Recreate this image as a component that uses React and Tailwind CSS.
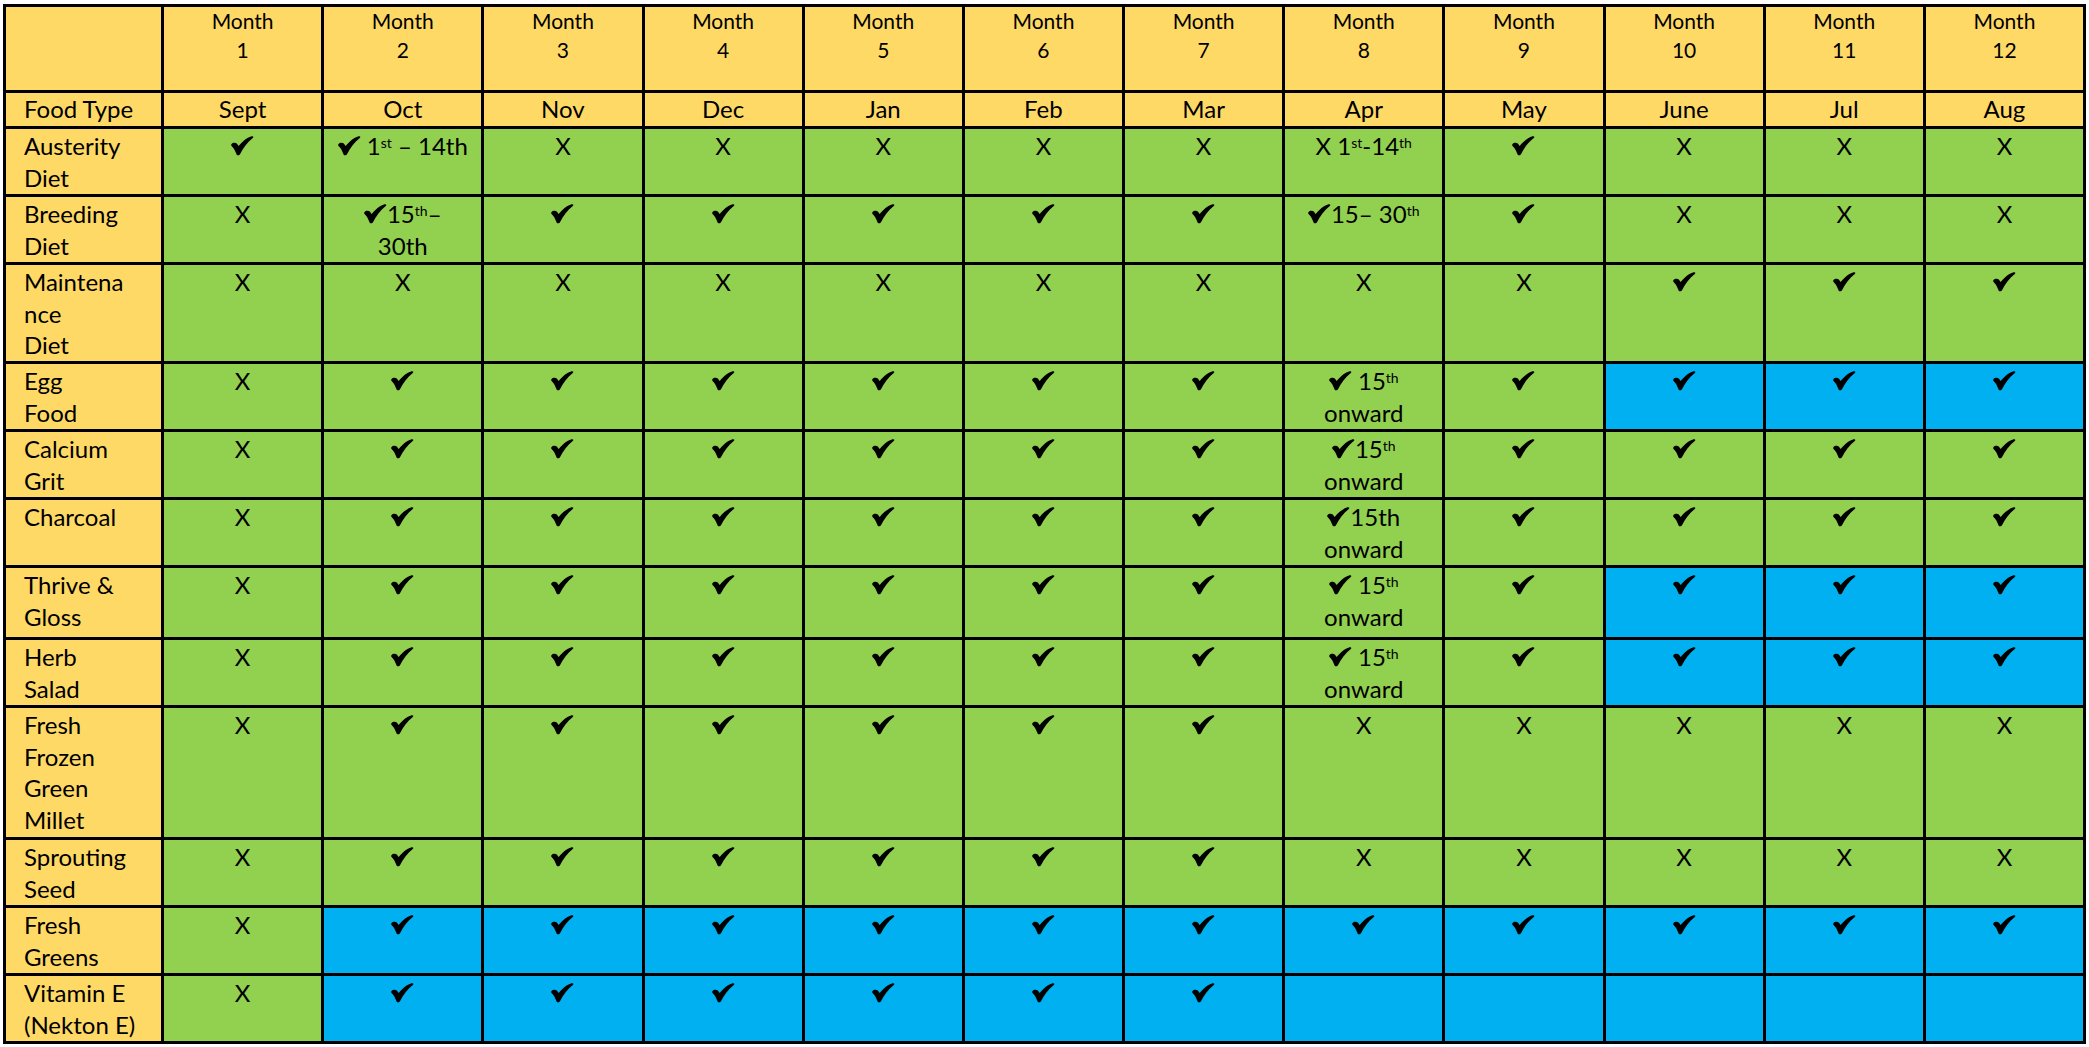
import React from "react";

const Y = "bg-[#FFD966]";
const G = "bg-[#92D050]";
const B = "bg-[#00B0F0]";

function Check() {
  return (
    <svg
      viewBox="0 0 24 21"
      className="inline-block w-[23px] h-[20px] align-[-1px]"
      aria-hidden="true"
    >
      <path
        d="M0.5 8.5 C1.5 6.8 4.5 6.5 6 7.8 L8 10.6 C11.5 6 16.5 1.8 21.5 0.3 C23.2 -0.2 24 1 22.8 2 C17 6.5 12.5 12.5 9.5 19 C8.8 20.5 6.6 20.8 5.8 19.3 C4.2 15.5 2.5 12 0.5 10.5 C0 10 0 9.2 0.5 8.5 Z"
        fill="#000"
      />
    </svg>
  );
}

const c = "c";
const x = "x";

const oct1 = (
  <>
    <Check /> 1<sup className="text-[14px]">st</sup> – 14th
  </>
);
const apr1 = (
  <>
    X 1<sup className="text-[14px]">st</sup>-14<sup className="text-[14px]">th</sup>
  </>
);
const octB = (
  <>
    <Check />15<sup className="text-[14px]">th</sup>–
    <br />
    30th
  </>
);
const aprB = (
  <>
    <Check />15– 30<sup className="text-[14px]">th</sup>
  </>
);
const aprSp = (
  <>
    <Check /> 15<sup className="text-[14px]">th</sup>
    <br />
    onward
  </>
);
const aprNs = (
  <>
    <Check />15<sup className="text-[14px]">th</sup>
    <br />
    onward
  </>
);
const aprPlain = (
  <>
    <Check />15th
    <br />
    onward
  </>
);

const late = [9, 10, 11];
const fromOct = [1, 2, 3, 4, 5, 6, 7, 8, 9, 10, 11];

const rows = [
  { label: ["Austerity", "Diet"], cells: [c, oct1, x, x, x, x, x, apr1, c, x, x, x], blue: [] },
  { label: ["Breeding", "Diet"], cells: [x, octB, c, c, c, c, c, aprB, c, x, x, x], blue: [] },
  { label: ["Maintena", "nce", "Diet"], cells: [x, x, x, x, x, x, x, x, x, c, c, c], blue: [] },
  { label: ["Egg", "Food"], cells: [x, c, c, c, c, c, c, aprSp, c, c, c, c], blue: late },
  { label: ["Calcium", "Grit"], cells: [x, c, c, c, c, c, c, aprNs, c, c, c, c], blue: [] },
  { label: ["Charcoal"], cells: [x, c, c, c, c, c, c, aprPlain, c, c, c, c], blue: [] },
  { label: ["Thrive &", "Gloss"], cells: [x, c, c, c, c, c, c, aprSp, c, c, c, c], blue: late },
  { label: ["Herb", "Salad"], cells: [x, c, c, c, c, c, c, aprSp, c, c, c, c], blue: late },
  { label: ["Fresh", "Frozen", "Green", "Millet"], cells: [x, c, c, c, c, c, c, x, x, x, x, x], blue: [] },
  { label: ["Sprouting", "Seed"], cells: [x, c, c, c, c, c, c, x, x, x, x, x], blue: [] },
  { label: ["Fresh", "Greens"], cells: [x, c, c, c, c, c, c, c, c, c, c, c], blue: fromOct },
  { label: ["Vitamin E", "(Nekton E)"], cells: [x, c, c, c, c, c, c, "", "", "", "", ""], blue: fromOct },
];

const months = ["Sept", "Oct", "Nov", "Dec", "Jan", "Feb", "Mar", "Apr", "May", "June", "Jul", "Aug"];

const cellBase = "border-r-[3px] border-b-[3px] border-black";

function renderContent(v) {
  if (v === "c") return <Check />;
  if (v === "x") return "X";
  return v;
}

export default function App() {
  return (
    <div className="min-h-screen bg-white font-['Lato',sans-serif] text-black">
      <div className="pt-[4px] pl-[3px]">
        <div className="grid w-[2083px] grid-cols-[158px_repeat(12,minmax(0,1fr))] grid-rows-[86px_36px_68px_68px_99px_68px_68px_68px_72px_68px_132px_68px_68px_68px] border-l-[3px] border-t-[3px] border-black">
          {/* Header row 1 */}
          <div className={`${cellBase} ${Y}`} />
          {months.map((m, i) => (
            <div
              key={"h" + i}
              className={`${cellBase} ${Y} text-center text-[21px] leading-[28.5px] pt-0`}
            >
              Month
              <br />
              {i + 1}
            </div>
          ))}

          {/* Header row 2 */}
          <div className={`${cellBase} ${Y} pl-[18px] text-[24px] leading-[32px]`}>Food Type</div>
          {months.map((m) => (
            <div key={m} className={`${cellBase} ${Y} text-center text-[24px] leading-[32px]`}>
              {m}
            </div>
          ))}

          {/* Body rows */}
          {rows.map((r, ri) => (
            <React.Fragment key={"r" + ri}>
              <div className={`${cellBase} ${Y} pl-[18px] pt-[1px] text-[24px] leading-[31.5px]`}>
                {r.label.map((l, li) => (
                  <div key={li}>{l}</div>
                ))}
              </div>
              {r.cells.map((v, ci) => (
                <div
                  key={"c" + ci}
                  className={`${cellBase} ${r.blue.includes(ci) ? B : G} text-center pt-[1px] text-[24px] leading-[31.5px]`}
                >
                  {renderContent(v)}
                </div>
              ))}
            </React.Fragment>
          ))}
        </div>
      </div>
    </div>
  );
}
